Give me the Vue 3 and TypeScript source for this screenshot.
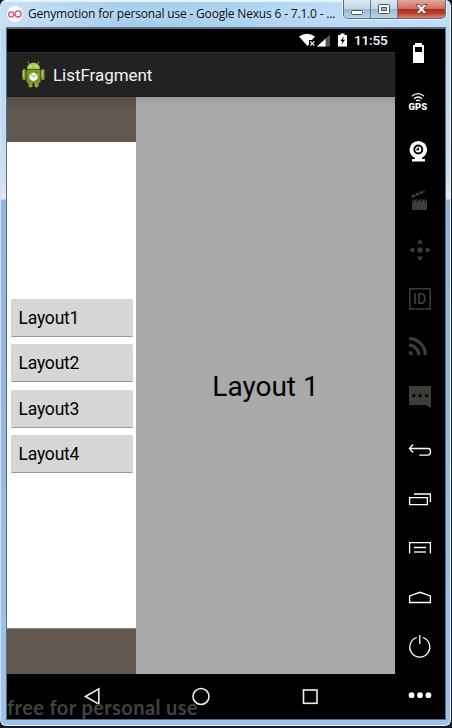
<script setup lang="ts">
import { ref } from 'vue'

interface Tool {
  name: string
  dim?: boolean
}

const tools: Tool[] = [
  { name: 'battery' },
  { name: 'gps' },
  { name: 'camera' },
  { name: 'capture', dim: true },
  { name: 'remote', dim: true },
  { name: 'identifiers', dim: true },
  { name: 'network', dim: true },
  { name: 'phone', dim: true },
  { name: 'back' },
  { name: 'recent' },
  { name: 'menu' },
  { name: 'home' },
  { name: 'power' },
  { name: 'more' },
]

const layouts = [1, 2, 3, 4]
const selected = ref(1)
const toolViewBox = (i: number) => `395 ${29 + i * 49} 49 49`
</script>

<template>
  <div class="window">
    <header class="titlebar">
      <svg class="app-icon" width="16" height="16" viewBox="0 0 16 16">
        <circle cx="8" cy="8" r="8" fill="#fff" />
        <g fill="none" stroke="#e2477d" stroke-width="1.3">
          <circle cx="4.2" cy="8.4" r="2.5" />
          <circle cx="11.1" cy="7.9" r="3.1" />
        </g>
      </svg>
      <span class="title">Genymotion for personal use - Google Nexus 6 - 7.1.0 - ...</span>
      <div class="controls">
        <button class="ctl min"><svg width="13" height="7" viewBox="0 0 13 7"><rect x=".5" y="1.5" width="11" height="4" rx="1" fill="#fff" stroke="#4c5668" /></svg></button>
        <button class="ctl max"><svg width="13" height="11" viewBox="0 0 13 11"><rect x=".5" y=".5" width="11" height="9" rx="1" fill="#fff" stroke="#4c5668" /><rect x="3.5" y="3.5" width="5" height="3" fill="#9fb7d3" stroke="#4c5668" /></svg></button>
        <button class="ctl close"><svg width="13" height="11" viewBox="0 0 13 11"><path d="M1 .5h3.3L6.5 3 8.700.5H12L8.500 5 12 9.500H8.700L6.500 7 4.300 9.500H1L4.500 5z" fill="#fff" stroke="#5d3d48" stroke-width=".9" /></svg></button>
      </div>
    </header>

    <main class="emulator">
      <section class="screen">
        <div class="status">
          <svg width="52" height="23" viewBox="296 29 52 23">
            <path d="M299 36.500Q307 31 315 36.500L312 40H309v4.500L307.500 46z" fill="#fff" />
            <path d="M310.300 41.300l4 4.400m0-4.400l-4 4.400" stroke="#fff" stroke-width="1.200" />
            <path d="M317 46.500L330 34.500V46.500z" fill="#555" />
            <path d="M317 46.500L325.500 38.700V46.500z" fill="#fff" />
            <path d="M338 35h2.500V33.500h4V35h2.500V46.500h-9z" fill="#fff" />
            <path d="M343.800 36.500l-3.300 4.600h1.800l-.9 3.600 3.600-4.900h-2z" fill="#000" />
          </svg>
          <span class="time">11:55</span>
        </div>
        <div class="actionbar">
          <svg width="24" height="28" viewBox="22 61 24 28">
            <g stroke="#87a83a" stroke-width="1"><path d="M29.500 64.500L28 61.500M37.500 64.500L39 61.500" /></g>
            <path d="M27 69C27 60.500 40 60.500 40 69z" fill="#a8cb55" />
            <circle cx="30.700" cy="66.300" r=".7" fill="#fff" /><circle cx="36.300" cy="66.300" r=".7" fill="#fff" />
            <g fill="#86a832"><rect x="22.500" y="69" width="3.200" height="11" rx="1.600" /><rect x="41.300" y="69" width="3.200" height="11" rx="1.600" /><rect x="28.500" y="81" width="4" height="6.500" rx="1.800" /><rect x="34.500" y="81" width="4" height="6.500" rx="1.800" /></g>
            <rect x="26.500" y="69.500" width="14" height="13.500" rx="1.500" fill="#759927" />
            <path d="M23.300 70.500v7M42 70.500v7" stroke="#b4d36b" />
            <path d="M33.500 72.500l4 2v4.500l-4 2.300-4-2.300v-4.500z" fill="#fff" />
            <path d="M30 74.500l3.500 1.800 3.500-1.800M33.500 76.300v1.500" fill="none" stroke="#82a138" stroke-width=".8" />
          </svg>
          <h1>ListFragment</h1>
        </div>
        <div class="content">
          <nav class="list-pane">
            <div class="list">
              <button v-for="n in layouts" :key="n" class="list-button" @click="selected = n">Layout{{ n }}</button>
            </div>
          </nav>
          <div class="detail">Layout {{ selected }}</div>
        </div>
        <div class="navbar">
          <span class="watermark">free for personal use</span>
          <svg width="388" height="45" viewBox="7 674 388 45">
            <g fill="none" stroke="#eee" stroke-width="1.600">
              <path d="M85.500 696.500L98.800 688.800V704.200z" />
              <circle cx="201" cy="696.500" r="8" />
              <rect x="303.500" y="690" width="13.500" height="13.300" />
            </g>
          </svg>
        </div>
      </section>

      <aside class="toolbar">
        <svg v-for="(tool, i) in tools" :key="tool.name" class="tool" :class="{ dim: tool.dim }" :viewBox="toolViewBox(i)">
          <path v-if="tool.name === 'battery'" fill-rule="evenodd" d="M413 45h2v-2h7v2h2v18h-11zM415 47v5h7v-5z" fill="currentColor" />
          <template v-else-if="tool.name === 'gps'">
            <g fill="none" stroke="currentColor" stroke-width="1.300">
              <path d="M412 96.200Q418 91.200 424 96.200M414 98.700Q418 95.200 422 98.700" />
              <path d="M416 100.900Q418 99.200 420 100.900" />
            </g>
            <text x="408.600" y="110" class="gps-text" textLength="18.500" lengthAdjust="spacingAndGlyphs">GPS</text>
          </template>
          <template v-else-if="tool.name === 'camera'">
            <circle cx="418.300" cy="149.700" r="8.800" fill="currentColor" />
            <circle cx="418.300" cy="149.500" r="4" fill="#fff" stroke="#000" stroke-width="1.900" />
            <path d="M418.300 147.500v2h-2" fill="none" stroke="#000" stroke-width="1.300" />
            <path d="M415 157h7v2h3v2.500h-13V159h3z" fill="currentColor" />
          </template>
          <template v-else-if="tool.name === 'capture'">
            <path d="M412 199.500h15v10.500h-15z" fill="currentColor" />
            <path d="M411 195.500L424 190l1 2.600-13 5.500z" fill="currentColor" />
            <path d="M414 193l2.500 3.500M418 191.300l2.500 3.500M422 189.700l2.500 3.500M412.500 202l2-2.500M416.500 202l2-2.500M420.500 202l2-2.500M424.500 202l2-2.500" stroke="#000" stroke-width="1" />
          </template>
          <g v-else-if="tool.name === 'remote'" fill="currentColor">
            <circle cx="420" cy="250" r="2.700" />
            <path d="M420 239l3 4.500h-6zM420 261l3-4.500h-6zM409 250l5-2.800v5.600zM431 250l-5-2.800v5.600z" />
          </g>
          <template v-else-if="tool.name === 'identifiers'">
            <rect x="409.800" y="288.800" width="20.400" height="20.200" fill="none" stroke="currentColor" stroke-width="1.500" />
            <text x="413" y="304.300" class="id-text" textLength="13.500" lengthAdjust="spacingAndGlyphs">ID</text>
          </template>
          <g v-else-if="tool.name === 'network'" fill="none" stroke="currentColor" stroke-width="3.200">
            <path d="M409 338.700A16.300 16.300 0 0 1 425.300 355M409 345.200A9.800 9.800 0 0 1 418.800 355" />
            <path d="M409 351a4 4 0 0 1 4 4h-4z" fill="currentColor" stroke="none" />
          </g>
          <template v-else-if="tool.name === 'phone'">
            <path d="M409 386h22v22l-5-3h-17z" fill="currentColor" />
            <g fill="#000"><circle cx="413.800" cy="395.600" r="1.700" /><circle cx="420.200" cy="395.600" r="1.700" /><circle cx="426.600" cy="395.600" r="1.700" /></g>
          </template>
          <g v-else fill="none" stroke="currentColor" stroke-width="1.300">
            <path v-if="tool.name === 'back'" d="M413 444.500l-3.500 4 3.500 4M409.500 448.500H428.500Q430.500 448.500 430.500 451.500Q430.500 455.200 427.500 455.200H419.300" />
            <path v-else-if="tool.name === 'recent'" d="M409.600 497.600h17.700v7h-17.700zM414 494h16.400v8" />
            <template v-else-if="tool.name === 'menu'">
              <path d="M409.600 553.500V542.600h20.800v10.900M414 547.500h12" />
              <path d="M414 552h12" stroke="#aaa" stroke-width="2" />
            </template>
            <path v-else-if="tool.name === 'home'" d="M409.600 602.500v-6.500l10.400-3.700 10.400 3.700v6.500z" />
            <path v-else-if="tool.name === 'power'" d="M416.800 637.500A10 10 0 1 0 422.800 637.500M419.800 635v9" />
            <g v-else fill="currentColor" stroke="none"><circle cx="411.600" cy="695.200" r="2.900" /><circle cx="420" cy="695.200" r="2.900" /><circle cx="428.400" cy="695.200" r="2.900" /></g>
          </g>
        </svg>
      </aside>
    </main>
  </div>
</template>

<style>
body {
  background: #141b27;
}
</style>

<style scoped>
.window {
  box-sizing: border-box;
  width: 451px;
  height: 726px;
  padding: 0 5px 5px 6px;
  border: 1px solid #f0f8ff;
  border-top: 0;
  border-left-color: #cfe3f6;
  border-radius: 6px;
  background: linear-gradient(180deg, #b7d9f2 0, #c0dcf5 130px, #cfdfee 180px, #e3edf6 199px, #8fb5de 200px, #94b9df 400px, #9bc4ed 100%);
  overflow: hidden;
}
.titlebar {
  display: flex;
  align-items: flex-start;
  height: 28px;
  margin: 0 -5px 0 -6px;
  padding-left: 6px;
  background: linear-gradient(90deg, #c8e0f4 0, #a6cdeb 28%, #a9d0ee 50%, #bcdcf6 75%, #bfdef6 100%);
  box-shadow: inset 0 2px 1px #e6f5ff;
}
.app-icon {
  flex: none;
  margin-top: 6px;
}
.title {
  flex: none;
  width: 315px;
  margin-left: 5px;
  font: 12px/28px "Open Sans", "Noto Sans", sans-serif;
  letter-spacing: -0.18px;
  white-space: nowrap;
  color: #0a0d14;
  text-shadow: 0 0 6px #e7f4ff;
}
.controls {
  display: flex;
  box-sizing: border-box;
  height: 19px;
  border: 1px solid #596d83;
  border-top: 0;
  border-radius: 0 0 5px 5px;
  box-shadow: 0 0 0 1px #e4f3ff;
  overflow: hidden;
}
.ctl {
  display: flex;
  align-items: center;
  justify-content: center;
  box-sizing: border-box;
  width: 27px;
  height: 18px;
  padding: 0;
  border: 0;
  border-right: 1px solid #65788d;
  background: linear-gradient(#dce9f4 0, #c2d4e5 50%, #9bb4cc 51%, #b9d5ec 100%);
}
.min {
  padding: 6px 0 0 1px;
}
.close {
  width: 47px;
  border-right: 0;
  background: linear-gradient(#e4a79b 0, #cd7062 48%, #b3281d 52%, #b9452e 75%, #dc8567 100%);
}
.emulator {
  display: flex;
  width: 438px;
  height: 690px;
  border-top: 1px solid #56697d;
  box-shadow: 0 0 0 1px #596d83;
  background: #000;
}
.screen {
  display: flex;
  flex-direction: column;
  width: 388px;
  font-family: Roboto, sans-serif;
}
.status {
  display: flex;
  height: 23px;
  padding-left: 289px;
  color: #fff;
}
.time {
  margin-left: 6px;
  font-size: 13.500px;
  font-weight: 500;
  letter-spacing: -0.15px;
  line-height: 23px;
}
.actionbar {
  display: flex;
  align-items: center;
  box-sizing: border-box;
  height: 45px;
  padding-left: 15px;
  border-top: 1px solid #303030;
  border-bottom: 1px solid #1a1a1a;
  background: #222;
}
h1 {
  margin: 0 0 0 7px;
  font-size: 17px;
  font-weight: 400;
  letter-spacing: -0.05px;
  color: #f3f3f3;
}
.content {
  display: flex;
  height: 577px;
}
.list-pane {
  display: flex;
  flex-direction: column;
  box-sizing: border-box;
  width: 129px;
  padding-top: 45px;
  background: linear-gradient(#56504a, #60574f 14px, #60574f);
}
.list {
  display: flex;
  flex-direction: column;
  justify-content: center;
  gap: 7.200px;
  box-sizing: border-box;
  height: 487px;
  padding: 2px 3px 0 4px;
  border-bottom: 1px solid #8e8983;
  background: #fff;
}
.list-button {
  box-sizing: border-box;
  height: 38px;
  padding: 1px 0 0 7.500px;
  border: 0;
  border-bottom: 1px solid #999;
  border-radius: 1.500px;
  background: #d6d6d6;
  font: 17.500px Roboto, sans-serif;
  letter-spacing: -0.2px;
  text-align: left;
  color: #000;
}
.detail {
  display: flex;
  align-items: center;
  justify-content: center;
  flex: 1;
  padding-top: 2px;
  background: linear-gradient(#9c9c9c, #a9a9a9 10px, #a9a9a9);
  font-size: 28px;
  color: #000;
}
.navbar {
  position: relative;
  height: 45px;
}
.navbar svg {
  display: block;
}
.watermark {
  position: absolute;
  left: 0;
  bottom: 0;
  font: bold 20px/24px Lato, sans-serif;
  letter-spacing: 0.4px;
  white-space: nowrap;
  color: #424242;
}
.toolbar {
  display: flex;
  flex-direction: column;
  width: 50px;
  color: #fff;
}
.tool {
  display: block;
  width: 49px;
  height: 49px;
  overflow: visible;
}
.dim {
  color: #3e3d39;
}
.gps-text {
  font: 900 8.200px Roboto, sans-serif;
  fill: currentColor;
}
.id-text {
  font: 500 14px Roboto, sans-serif;
  fill: currentColor;
}
</style>
